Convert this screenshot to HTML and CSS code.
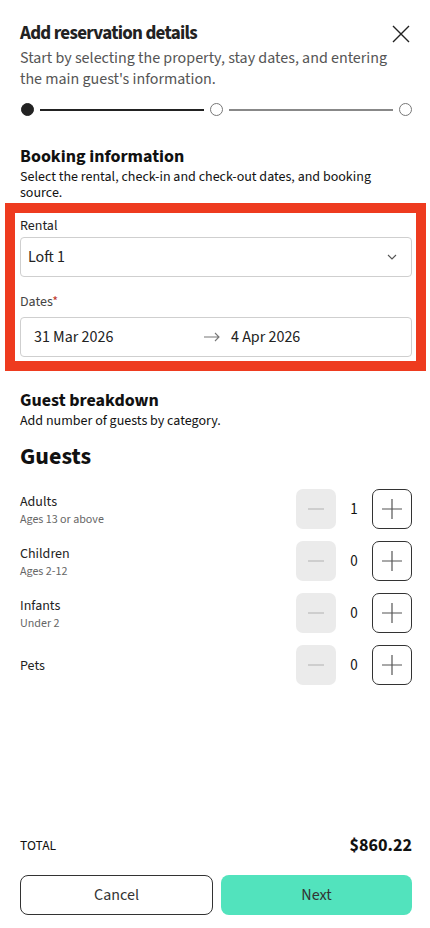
FILE: index.html
```html
<!DOCTYPE html>
<html lang="en">
<head>
<meta charset="utf-8">
<title>Add reservation details</title>
<link rel="stylesheet" href="styles.css">
</head>
<body>
<div class="page">
  <header class="head">
    <div class="head-row">
      <h1 class="title">Add reservation details</h1>
      <button class="close" aria-label="Close">
        <svg width="18" height="18" viewBox="0 0 18 18"><path d="M1 1L17 17M17 1L1 17" stroke="#222" stroke-width="1.4" fill="none"/></svg>
      </button>
    </div>
    <p class="lead">Start by selecting the property, stay dates, and entering the main guest's information.</p>
  </header>

  <div class="steps">
    <span class="dot dot-filled"></span>
    <span class="bar bar-dark"></span>
    <span class="dot"></span>
    <span class="bar bar-grey"></span>
    <span class="dot"></span>
  </div>

  <section class="section">
    <h2 class="sec-title">Booking information</h2>
    <p class="sec-sub">Select the rental, check-in and check-out dates, and booking source.</p>
  </section>

  <div class="highlight">
    <label class="field-label">Rental</label>
    <div class="input select">
      <span>Loft 1</span>
      <svg width="10" height="6" viewBox="0 0 10 6"><path d="M1 1L5 5L9 1" stroke="#555" stroke-width="1.1" fill="none"/></svg>
    </div>
    <label class="field-label dates-label">Dates<span class="req">*</span></label>
    <div class="input dates">
      <span class="date-start">31 Mar 2026</span>
      <svg class="arrow" width="16" height="10" viewBox="0 0 16 10"><path d="M0 5H15M11 1L15 5L11 9" stroke="#777" stroke-width="1.1" fill="none"/></svg>
      <span class="date-end">4 Apr 2026</span>
    </div>
  </div>

  <section class="section guests-sec">
    <h2 class="sec-title">Guest breakdown</h2>
    <p class="sec-sub">Add number of guests by category.</p>
  </section>

  <h3 class="guests-title">Guests</h3>

  <div class="rows">
    <div class="row">
      <div class="row-text"><div class="row-name">Adults</div><div class="row-note">Ages 13 or above</div></div>
      <div class="stepper">
        <button class="sbtn minus"><svg width="16" height="16" viewBox="0 0 16 16"><path d="M0 8H16" stroke="#bbb" stroke-width="1.2"/></svg></button>
        <span class="count">1</span>
        <button class="sbtn plus"><svg width="20" height="20" viewBox="0 0 20 20"><path d="M0 10H20M10 0V20" stroke="#555" stroke-width="1.2"/></svg></button>
      </div>
    </div>
    <div class="row">
      <div class="row-text"><div class="row-name">Children</div><div class="row-note">Ages 2-12</div></div>
      <div class="stepper">
        <button class="sbtn minus"><svg width="16" height="16" viewBox="0 0 16 16"><path d="M0 8H16" stroke="#bbb" stroke-width="1.2"/></svg></button>
        <span class="count">0</span>
        <button class="sbtn plus"><svg width="20" height="20" viewBox="0 0 20 20"><path d="M0 10H20M10 0V20" stroke="#555" stroke-width="1.2"/></svg></button>
      </div>
    </div>
    <div class="row">
      <div class="row-text"><div class="row-name">Infants</div><div class="row-note">Under 2</div></div>
      <div class="stepper">
        <button class="sbtn minus"><svg width="16" height="16" viewBox="0 0 16 16"><path d="M0 8H16" stroke="#bbb" stroke-width="1.2"/></svg></button>
        <span class="count">0</span>
        <button class="sbtn plus"><svg width="20" height="20" viewBox="0 0 20 20"><path d="M0 10H20M10 0V20" stroke="#555" stroke-width="1.2"/></svg></button>
      </div>
    </div>
    <div class="row">
      <div class="row-text"><div class="row-name">Pets</div></div>
      <div class="stepper">
        <button class="sbtn minus"><svg width="16" height="16" viewBox="0 0 16 16"><path d="M0 8H16" stroke="#bbb" stroke-width="1.2"/></svg></button>
        <span class="count">0</span>
        <button class="sbtn plus"><svg width="20" height="20" viewBox="0 0 20 20"><path d="M0 10H20M10 0V20" stroke="#555" stroke-width="1.2"/></svg></button>
      </div>
    </div>
  </div>

  <footer class="foot">
    <div class="total">
      <span class="total-label">TOTAL</span>
      <span class="total-value">$860.22</span>
    </div>
    <div class="actions">
      <button class="btn btn-cancel">Cancel</button>
      <button class="btn btn-next">Next</button>
    </div>
  </footer>
</div>
</body>
</html>
```

FILE: styles.css
```css
* { box-sizing: border-box; }
html, body { margin: 0; padding: 0; background: #fff; }
body {
  font-family: "Source Sans 3", Lato, sans-serif;
  color: #1a1a1a;
}
.page {
  height: 928px;
  padding: 20px 18px 13px 20px;
  display: flex;
  flex-direction: column;
}
.head-row {
  display: flex;
  justify-content: space-between;
  align-items: flex-start;
}
.title {
  margin: 0;
  font-size: 19px;
  line-height: 26px;
  font-weight: 700;
  letter-spacing: -0.7px;
  color: #222;
  padding-top: 1px;
}
.close {
  border: 0;
  background: none;
  padding: 0;
  margin-top: 5px;
  margin-right: 2px;
  display: flex;
}
.lead {
  margin: 1px 0 0;
  font-size: 16px;
  line-height: 21px;
  color: #555;
}
.steps {
  display: flex;
  align-items: center;
  margin-top: 13px;
  padding-left: 1px;
}
.dot {
  width: 13px;
  height: 13px;
  border-radius: 50%;
  border: 1.3px solid #777;
  flex: none;
}
.dot-filled { background: #222; border-color: #222; }
.bar { flex: 1; height: 2px; margin: 0 6px; }
.bar-dark { background: #222; }
.bar-grey { background: #888; }

.section { margin-top: 30px; }
.sec-title {
  margin: 0;
  font-size: 18px;
  line-height: 22px;
  font-weight: 700;
  color: #111;
}
.sec-sub {
  margin: 1px 0 0;
  font-size: 14px;
  line-height: 16px;
  color: #111;
}

.highlight {
  margin: 2px -14px 0 -15px;
  border: 10px solid #ee3b1f;
  padding: 4px 4px 4px 5px;
}
.field-label {
  display: block;
  font-size: 14px;
  line-height: 18px;
  color: #222;
}
.select { margin-top: 2px; }
.dates-label { margin-top: 16px; color: #444; }
.req { color: #c0392b; }
.input {
  height: 40px;
  border: 1px solid #cfcfcf;
  border-radius: 4px;
  display: flex;
  align-items: center;
  font-size: 16px;
  color: #222;
}
.select {
  justify-content: space-between;
  padding: 0 14px 0 7px;
}
.dates { margin-top: 6px; padding: 0 13px; }
.date-start { width: 170px; }
.arrow { margin-right: 11px; }

.guests-sec { margin-top: 19px; }
.guests-title {
  margin: 12px 0 0;
  font-size: 24px;
  line-height: 32px;
  font-weight: 700;
  color: #111;
}
.rows {
  margin-top: 16px;
  display: flex;
  flex-direction: column;
  gap: 12px;
}
.row {
  display: flex;
  justify-content: space-between;
  align-items: center;
  height: 40px;
}
.row-text {
  display: flex;
  flex-direction: column;
  gap: 2px;
  padding-top: 2px;
}
.row-name { font-size: 14px; line-height: 17px; color: #222; }
.row-note { font-size: 12px; line-height: 14px; color: #666; }
.stepper { display: flex; align-items: center; }
.sbtn {
  width: 40px;
  height: 40px;
  border-radius: 7px;
  padding: 0;
  display: flex;
  align-items: center;
  justify-content: center;
}
.minus { background: #ebebeb; border: 0; }
.plus { background: #fff; border: 1px solid #333; }
.count {
  width: 36px;
  text-align: center;
  font-size: 15px;
  color: #111;
}

.foot { margin-top: auto; }
.total {
  display: flex;
  justify-content: space-between;
  align-items: center;
}
.total-label { font-size: 13.5px; color: #111; }
.total-value { font-size: 18px; font-weight: 700; color: #111; }
.actions {
  margin-top: 17px;
  display: flex;
  gap: 8px;
}
.btn {
  flex: 1;
  height: 40px;
  border-radius: 8px;
  font-family: inherit;
  font-size: 16px;
  color: #333;
}
.btn-cancel { background: #fff; border: 1px solid #333; }
.btn-next { background: #52e3bd; border: 0; }
```
